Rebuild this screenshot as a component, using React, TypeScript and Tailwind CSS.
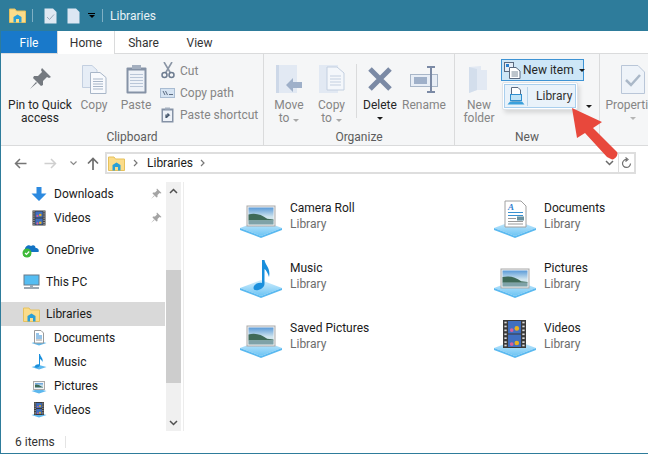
const font = "font-['Roboto',sans-serif]";

function Platform({ id }: { id: string }) {
  return (
    <g>
      <defs>
        <linearGradient id={id} x1="0" y1="0" x2="0" y2="1">
          <stop offset="0" stopColor="#d4effd" />
          <stop offset="1" stopColor="#6cc4f4" />
        </linearGradient>
      </defs>
      <path d="M0 28 L21 20 L42 28 L21 36 Z" fill={`url(#${id})`} />
      <path d="M0 28 L21 36 L42 28 L42 30 L21 38 L0 30 Z" fill="#5ab9f0" />
    </g>
  );
}

function Landscape({ x, y, w, h, id }: { x: number; y: number; w: number; h: number; id: string }) {
  return (
    <g>
      <defs>
        <linearGradient id={id} x1="0" y1="0" x2="0" y2="1">
          <stop offset="0" stopColor="#5b9bd8" />
          <stop offset="0.55" stopColor="#cfe4ee" />
        </linearGradient>
      </defs>
      <rect x={x} y={y} width={w} height={h} fill="#f4f4f4" stroke="#a9a9a9" />
      <rect x={x + 1.5} y={y + 1.5} width={w - 3} height={h - 3} fill={`url(#${id})`} />
      <path d={`M${x + 1.5} ${y + h * 0.42} Q${x + w * 0.4} ${y + h * 0.3} ${x + w * 0.72} ${y + h * 0.64} L${x + w - 1.5} ${y + h * 0.68} L${x + w - 1.5} ${y + h * 0.72} L${x + 1.5} ${y + h * 0.72} Z`} fill="#3f6a58" />
      <rect x={x + 1.5} y={y + h * 0.72} width={w - 3} height={h * 0.28 - 1.5} fill="#7fa2a8" />
    </g>
  );
}

function Film({ x, y, w, h }: { x: number; y: number; w: number; h: number }) {
  return (
    <g>
      <rect x={x} y={y} width={w} height={h} fill="#3a3a3a" />
      <rect x={x + w * 0.22} y={y + 1} width={w * 0.56} height={h / 2 - 1.5} fill="#3f6fc0" />
      <rect x={x + w * 0.22} y={y + h / 2 + 0.5} width={w * 0.56} height={h / 2 - 1.5} fill="#3f6fc0" />
      <circle cx={x + w * 0.6} cy={y + h * 0.3} r={w * 0.1} fill="#e8b020" />
      <circle cx={x + w * 0.38} cy={y + h * 0.36} r={w * 0.08} fill="#d8609a" />
      <circle cx={x + w * 0.6} cy={y + h * 0.82} r={w * 0.1} fill="#e8b020" />
      <circle cx={x + w * 0.38} cy={y + h * 0.86} r={w * 0.08} fill="#d8609a" />
      {[0.06, 0.2, 0.34, 0.48, 0.62, 0.76, 0.88].map((p) => (
        <g key={p}>
          <rect x={x + w * 0.06} y={y + h * p} width={w * 0.1} height={h * 0.06} fill="#ddd" />
          <rect x={x + w * 0.84} y={y + h * p} width={w * 0.1} height={h * 0.06} fill="#ddd" />
        </g>
      ))}
    </g>
  );
}

function LibIcon({ kind, name }: { kind: string; name: string }) {
  const id = name.replace(" ", "");
  return (
    <svg width="42" height="38" viewBox="0 0 42 38" className="shrink-0">
      <Platform id={`${id}-base`} />
      {kind === "pic" && <Landscape x={7} y={6} w={28} h={20} id={`${id}-sky`} />}
      {kind === "pic2" && <Landscape x={7} y={9} w={28} h={19} id={`${id}-sky`} />}
      {kind === "music" && (
        <path d="M22 0 L24.500 0 C25 5 31 8 29 17 C28 13 26 10 24.500 9 L24.500 24 C24.500 29 14 33 13.500 28 C13.500 24 19 22 22 23 Z" fill="#1a8fdc" />
      )}
      {kind === "doc" && (
        <g>
          <path d="M11 1 H27 L32 6 V27 H11 Z" fill="#fff" stroke="#a0a0a0" />
          <text x="14" y="10" fontSize="9" fontStyle="italic" fontWeight="700" fill="#2f80d0" fontFamily="Liberation Serif, serif">A</text>
          <path d="M14 12.500 H29 M14 15.500 H29" stroke="#3a90d0" />
          <path d="M14 18.500 H22 M14 21.500 H29 M14 24 H29" stroke="#999" />
          <rect x="23" y="16.500" width="7" height="4" fill="#6a92a0" />
        </g>
      )}
      {kind === "film" && <Film x={9} y={0} w={23} h={28} />}
    </svg>
  );
}

function SmallIcon({ kind }: { kind: string }) {
  if (kind === "down")
    return (
      <svg width="16" height="16" viewBox="0 0 16 16"><path d="M5.500 1 H10.500 V7.500 H15.500 L8 15 L0.500 7.500 H5.500 Z" fill="#2c8ae0" /></svg>
    );
  if (kind === "film")
    return <svg width="16" height="16" viewBox="0 0 16 16"><Film x={1.500} y={0.500} w={13} h={15} /></svg>;
  if (kind === "cloud")
    return (
      <svg width="18" height="16" viewBox="0 0 18 16">
        <path d="M3 9 C2 5 6 2 9 4 C12 2 14 5 13.500 6 C16 6 17.500 8 16.500 10 H6 Z" fill="#1273c4" />
        <circle cx="5" cy="11" r="4.500" fill="#3fba3a" />
        <path d="M3 11 L4.500 12.500 L7.200 9.500" stroke="#fff" strokeWidth="1.200" fill="none" />
      </svg>
    );
  if (kind === "pc")
    return (
      <svg width="17" height="16" viewBox="0 0 17 16">
        <rect x="1" y="1" width="15" height="10" fill="#55bdf2" stroke="#6a7a88" />
        <path d="M7 11 H10 V13 H7 Z" fill="#9aa8b4" />
        <path d="M1 14 H16" stroke="#7a8a98" strokeWidth="1.500" />
      </svg>
    );
  if (kind === "lib") return <LibFolder />;
  return (
    <svg width="16" height="16" viewBox="0 0 16 16">
      <path d="M0.500 13 L8 11 L15.500 13 L8 15.500 Z" fill="#5db8ee" />
      {kind === "doc" && (
        <g>
          <path d="M3.500 0.500 H10 L12.500 3 V13 H3.500 Z" fill="#fff" stroke="#9a9a9a" />
          <path d="M5 4 H8 M5 6 H11 M5 8 H11" stroke="#2f88d0" />
          <path d="M5 10 H11" stroke="#999" />
        </g>
      )}
      {kind === "note" && (
        <path d="M8 0 H9 C9.500 3 12.500 4 11.500 8 C11 6.500 10 5.500 9 5 V11 C9 13.500 4 15 4 12.500 C4 11 6.500 10 8 10.500 Z" fill="#1a8fdc" />
      )}
      {kind === "pic" && <Landscape x={2.500} y={3.500} w={11} h={8} id="nav-sky" />}
      {kind === "filmlib" && <Film x={3} y={0} w={10} h={13} />}
    </svg>
  );
}

function LibFolder() {
  return (
    <svg width="17" height="15" viewBox="0 0 17 15">
      <path d="M0.500 1 H6 L7.500 3 H16.500 V14.500 H0.500 Z" fill="#fbdc8a" stroke="#e6c15c" />
      <path d="M4.500 9 L8.500 6.500 L12.500 9 V14.500 H10 V11 H7 V14.500 H4.500 Z" fill="#2a9fd6" />
    </svg>
  );
}

function Pin({ color = "#a4a4a4", size = 12 }: { color?: string; size?: number }) {
  return (
    <svg width={size} height={size} viewBox="0 0 12 12">
      <path d="M7 0.500 L11.500 5 L10.500 5.500 L9.500 5 L7.500 7 L7.500 9 L6.500 9.500 L2.500 5.500 L3 4.500 L5 4.500 L7 2.500 L6.500 1.500 Z M4 7.500 L1 11 L4.500 8 Z" fill={color} />
    </svg>
  );
}

function Caret({ color = "#1a1a1a" }: { color?: string }) {
  return <span className="inline-block h-0 w-0 border-x-[3px] border-t-[3px] border-x-transparent" style={{ borderTopColor: color }} />;
}

function LargeBtn({ w, lines, icon, dim = true, caret, ml = 0 }: { w: number; lines: string[]; icon: React.ReactNode; dim?: boolean; caret?: string; ml?: number }) {
  return (
    <div className={`flex shrink-0 flex-col items-center ${dim ? "text-[#858585]" : "text-[#262626]"}`} style={{ width: w, marginLeft: ml }}>
      <div className="flex h-[38px] items-center justify-center">{icon}</div>
      <div className="mt-[1px] text-center text-[12px] leading-[13px] whitespace-nowrap">
        {lines.map((l, i) => (
          <div key={i} className="h-[13px]">
            {l}
            {i === lines.length - 1 && caret === "inline" && (
              <span className="ml-[4px] inline-block align-middle"><Caret color="#a8a8a8" /></span>
            )}
          </div>
        ))}
        {caret === "below" && <div className="flex h-[13px] items-center justify-center"><Caret /></div>}
        {caret === "belowdim" && <div className="flex h-[13px] items-center justify-center"><Caret color="#b5b5b5" /></div>}
      </div>
    </div>
  );
}

function Group({ w, label, children }: { w: number; label: string; children: React.ReactNode }) {
  return (
    <div className="flex h-full shrink-0 flex-col border-r border-[#dadbdc]" style={{ width: w }}>
      <div className="flex flex-1 pt-[6px]">{children}</div>
      <div className="h-[20px] pt-[2px] text-center text-[12px] leading-[20px] text-[#5c5c5c]">{label}</div>
    </div>
  );
}

function NavRow({ indent, icon, text, pin, sel }: { indent: number; icon: string; text: string; pin?: boolean; sel?: boolean }) {
  return (
    <div className={`flex h-[24px] items-center ${sel ? "bg-[#d9d9d9]" : ""}`}>
      <div className="flex w-[20px] justify-center" style={{ marginLeft: indent }}><SmallIcon kind={icon} /></div>
      <span className="ml-[5px] flex-1 text-[12px] text-[#1a1a1a]">{text}</span>
      {pin && <span className="mr-[3px]"><Pin /></span>}
    </div>
  );
}

function Item({ kind, name }: { kind: string; name: string }) {
  return (
    <div className="flex h-[60px] items-start">
      <LibIcon kind={kind} name={name} />
      <div className="ml-[8px] leading-[16px]">
        <div className="text-[12px] text-[#1a1a1a]">{name}</div>
        <div className="text-[12px] text-[#6d6d6d]">Library</div>
      </div>
    </div>
  );
}

export default function App() {
  return (
    <div className={`relative flex h-[454px] w-[648px] flex-col overflow-hidden border-b border-l border-[#2e7c9b] bg-white ${font}`}>
      {/* title bar */}
      <div className="-ml-px flex h-[31px] shrink-0 items-center bg-[#2e7c9b] pl-[9px] text-[12px] text-white">
        <LibFolder />
        <div className="ml-[6px] h-[13px] w-px bg-[#7fb0c4]" />
        <svg className="ml-[11px]" width="13" height="16" viewBox="0 0 13 16"><path d="M0.500 0.500 H9 L12.500 4 V15.500 H0.500 Z" fill="#dfe8f2" /><path d="M3 9 L5.500 11.500 L10 6.500" stroke="#9aa9b8" fill="none" /></svg>
        <svg className="ml-[10px]" width="13" height="16" viewBox="0 0 13 16"><path d="M0.500 0.500 H9 L12.500 4 V15.500 H0.500 Z" fill="#dce6f3" /></svg>
        <div className="ml-[8px] flex w-[7px] flex-col items-center"><div className="mb-[1px] h-px w-[7px] bg-black" /><Caret color="#000" /></div>
        <div className="ml-[7px] h-[13px] w-px bg-[#7fb0c4]" />
        <span className="ml-[7px] text-[#e8f2f6]">Libraries</span>
      </div>

      {/* tabs */}
      <div className="relative flex h-[23px] shrink-0 items-stretch border-b border-[#dadbdc] text-[12px] text-[#333]">
        <div className="flex w-[56px] items-center justify-center bg-[#1979ca] pt-[1px] text-white">File</div>
        <div className="-mb-px flex w-[58px] items-center justify-center border-x border-[#dadbdc] bg-white pt-[1px]">Home</div>
        <div className="flex w-[57px] items-center justify-center pt-[1px]">Share</div>
        <div className="flex w-[55px] items-center justify-center pt-[1px]">View</div>
      </div>

      {/* ribbon */}
      <div className="flex h-[92px] shrink-0 border-b border-[#dadbdc] bg-[#f5f6f7] text-[12px]">
        <Group w={263} label="Clipboard">
          <LargeBtn w={72} ml={3} dim={false} lines={["Pin to Quick", "access"]} icon={
            <svg width="24" height="24" viewBox="0 0 12 12"><path d="M7 0.500 L11.500 5 L10.500 5.500 L9.500 5 L7.500 7 L7.500 9 L6.500 9.500 L2.500 5.500 L3 4.500 L5 4.500 L7 2.500 L6.500 1.500 Z M4 7.500 L1 11 L4.500 8 Z" fill="#757a80" /></svg>
          } />
          <LargeBtn w={36} lines={["Copy"]} icon={
            <svg width="25" height="29" viewBox="0 0 25 29">
              <path d="M0.500 0.500 H10 L15 5 V22.500 H0.500 Z" fill="#e6edf6" stroke="#c3cfe0" />
              <path d="M8.500 7.500 H18 L24 12.500 V28.500 H8.500 Z" fill="#f8fafd" stroke="#a8b6c8" />
              <path d="M11 14 H21 M11 16.500 H21 M11 19 H21 M11 21.500 H21 M11 24 H21" stroke="#a8b6c8" />
            </svg>
          } />
          <LargeBtn w={40} ml={4} lines={["Paste"]} icon={
            <svg width="21" height="30" viewBox="0 0 21 30">
              <rect x="0.500" y="3.500" width="20" height="26" rx="1" fill="#8592a6" />
              <rect x="2.500" y="6.500" width="16" height="21" fill="#eef2f8" />
              <path d="M4 10.500 H17 M4 13.500 H17 M4 16.500 H17 M4 19.500 H17 M4 22.500 H17" stroke="#b9c6d8" />
              <rect x="6" y="1" width="9" height="4" fill="#a4afbf" />
            </svg>
          } />
          <div className="ml-[3px] flex shrink-0 flex-col gap-[3px] pt-[1px] text-[#858585]">
            {[
              ["Cut", <svg key="c" width="14" height="17" viewBox="0 0 14 17"><path d="M3 0 L9.500 11 M11 0 L4.500 11" stroke="#8a95a5" strokeWidth="1.600" /><circle cx="3.500" cy="13" r="2.500" fill="none" stroke="#6d7c90" strokeWidth="1.500" /><circle cx="10.500" cy="13" r="2.500" fill="none" stroke="#6d7c90" strokeWidth="1.500" /></svg>],
              ["Copy path", <svg key="p" width="15" height="10" viewBox="0 0 15 10"><rect x="0.500" y="0.500" width="14" height="9" fill="#d5e3f2" stroke="#a9bcd2" /><path d="M3 3 L5 7 M5.500 3 L7.500 7 M9 6.500 H13" stroke="#5a6a80" /></svg>],
              ["Paste shortcut", <svg key="s" width="13" height="16" viewBox="0 0 13 16"><rect x="0.500" y="1.500" width="12" height="14" fill="#8592a6" /><rect x="2" y="3.500" width="9" height="10.500" fill="#eef2f8" /><rect x="4" y="0.500" width="5" height="2" fill="#a4afbf" /><path d="M5 11 V8 H8 L6.500 6.500 M8 8 L5.500 10.500" stroke="#44566c" strokeWidth="1.200" fill="none" /></svg>],
            ].map(([t, ic]) => (
              <div key={t as string} className="flex h-[19px] items-center">
                <span className="flex w-[17px] justify-center">{ic}</span>
                <span className="ml-[4px] whitespace-nowrap">{t}</span>
              </div>
            ))}
          </div>
        </Group>
        <Group w={191} label="Organize">
          <LargeBtn w={42} ml={4} lines={["Move", "to"]} caret="inline" icon={
            <svg width="27" height="29" viewBox="0 0 27 29"><path d="M0 0 H21 V28 H0 Z" fill="#e2e9f3" /><path d="M0 0 H3 V28 H0 Z" fill="#cdd8e8" /><path d="M10 20 L17 13 V17 H26 V23 H17 V27 Z" fill="#9fb0c9" /></svg>
          } />
          <LargeBtn w={43} lines={["Copy", "to"]} caret="inline" icon={
            <svg width="26" height="29" viewBox="0 0 26 29"><path d="M0 0 H19 V28 H0 Z" fill="#e2e9f3" /><path d="M8 2 H18 L25 8 V25 H8 Z" fill="#f4f7fb" stroke="#c3cfe0" /><path d="M11 11 H22 M11 14 H22 M11 17 H22 M11 20 H22" stroke="#c3cfe0" /></svg>
          } />
          <div className="mb-[7px] ml-[3px] mt-[4px] w-px bg-[#dadbdc]" />
          <LargeBtn w={46} dim={false} lines={["Delete"]} caret="below" icon={
            <svg width="26" height="26" viewBox="0 0 26 26"><path d="M3 3 L23 23 M23 3 L3 23" stroke="#7b8aa5" strokeWidth="5" /></svg>
          } />
          <LargeBtn w={42} lines={["Rename"]} icon={
            <svg width="29" height="27" viewBox="0 0 29 27"><rect x="0.500" y="8.500" width="27" height="12" fill="#e8eef6" stroke="#a8b6c8" /><rect x="4" y="11" width="13" height="7" fill="#9fb0c9" /><path d="M17 1 H25 M17 26 H25 M21 1 V26" stroke="#7b8aa5" strokeWidth="2" /></svg>
          } />
        </Group>
        <Group w={145} label="New">
          <LargeBtn w={48} lines={["New", "folder"]} icon={
            <svg width="20" height="27" viewBox="0 0 20 27"><path d="M0 1 L12 0 V4 H18 V24 H8 L0 27 Z" fill="#e2e9f3" /><path d="M0 1 L8 3 V24 L0 27 Z" fill="#d3deec" /></svg>
          } />
          <div className="ml-[-2px] mt-[-1px] shrink-0">
            <div className="flex h-[22px] w-[83px] items-center border border-[#3d93d4] bg-[#cde6f7] pl-[2px] whitespace-nowrap text-[#262626]">
              <svg className="shrink-0" width="17" height="17" viewBox="0 0 17 17"><rect x="0.500" y="0.500" width="9" height="9" fill="#e6eef8" stroke="#5a6a80" /><rect x="2" y="2" width="3" height="3" fill="#2a80d0" /><path d="M5.500 5.500 H12 L16 9 V16.500 H5.500 Z" fill="#fff" stroke="#5a6a80" /><path d="M7.500 10 H14 M7.500 12 H14 M7.500 14 H14" stroke="#7a8a98" /></svg>
              <span className="ml-[2px]">New item</span>
              <span className="ml-[5px] flex"><Caret /></span>
            </div>
          </div>
        </Group>
        <div className="min-w-0 flex-1 overflow-hidden pt-[6px] text-[#858585]">
          <LargeBtn w={64} ml={1} lines={["Properties"]} caret="belowdim" icon={
            <svg width="24" height="29" viewBox="0 0 24 29"><path d="M0.500 0.500 H17 L23.500 7 V28.500 H0.500 Z" fill="#eef3f9" stroke="#b9c6d8" /><path d="M5 15 L10 20 L19 10" stroke="#aab8c8" strokeWidth="2.500" fill="none" /></svg>
          } />
        </div>
      </div>

      {/* address row */}
      <div className="flex h-[36px] shrink-0 items-center pb-[2px] text-[12px]">
        <svg className="ml-[13px]" width="13" height="11" viewBox="0 0 13 11"><path d="M12.500 5.500 H1.500 M6 1 L1.500 5.500 L6 10" stroke="#757575" strokeWidth="1.500" fill="none" /></svg>
        <svg className="ml-[17px]" width="13" height="11" viewBox="0 0 13 11"><path d="M0.500 5.500 H11.500 M7 1 L11.500 5.500 L7 10" stroke="#cfcfcf" strokeWidth="1.500" fill="none" /></svg>
        <svg className="ml-[13px]" width="7" height="5" viewBox="0 0 7 5"><path d="M0.500 0.500 L3.500 3.500 L6.500 0.500" stroke="#8a8a8a" strokeWidth="1.200" fill="none" /></svg>
        <svg className="ml-[10px]" width="12" height="13" viewBox="0 0 12 13"><path d="M6 13 V2 M1 6.500 L6 1.500 L11 6.500" stroke="#6e6e6e" strokeWidth="1.700" fill="none" /></svg>
        <div className="ml-[6px] flex h-[22px] w-[531px] items-center border-2 border-[#dedede]">
          <div className="ml-[1px] flex"><LibFolder /></div>
          <svg className="ml-[8px]" width="5" height="8" viewBox="0 0 5 8"><path d="M1 1 L4 4 L1 7" stroke="#777" strokeWidth="1.200" fill="none" /></svg>
          <span className="ml-[9px] text-[#1a1a1a]">Libraries</span>
          <svg className="ml-[7px]" width="5" height="8" viewBox="0 0 5 8"><path d="M1 1 L4 4 L1 7" stroke="#777" strokeWidth="1.200" fill="none" /></svg>
          <div className="flex-1" />
          <svg className="mr-[4px]" width="9" height="6" viewBox="0 0 9 6"><path d="M1 1 L4.500 4.500 L8 1" stroke="#6a6a6a" strokeWidth="1.500" fill="none" /></svg>
          <div className="flex h-full w-[16px] items-center justify-center border-l border-[#dedede]">
            <svg width="11" height="12" viewBox="0 0 11 12"><path d="M9.500 6.500 A4 4 0 1 1 6 2.500 M4.500 0.500 L7 2.500 L4.500 4.500" stroke="#707070" strokeWidth="1.200" fill="none" /></svg>
          </div>
        </div>
      </div>

      {/* main */}
      <div className="flex h-[249px] shrink-0">
        <div className="w-[164px] border-b-0">
          <NavRow indent={28} icon="down" text="Downloads" pin />
          <NavRow indent={28} icon="film" text="Videos" pin />
          <div className="h-[8px]" />
          <NavRow indent={20} icon="cloud" text="OneDrive" />
          <div className="h-[8px]" />
          <NavRow indent={20} icon="pc" text="This PC" />
          <div className="h-[8px]" />
          <NavRow indent={20} icon="lib" text="Libraries" sel />
          <NavRow indent={28} icon="doc" text="Documents" />
          <NavRow indent={28} icon="note" text="Music" />
          <NavRow indent={28} icon="pic" text="Pictures" />
          <NavRow indent={28} icon="filmlib" text="Videos" />
        </div>
        <div className="ml-[1px] flex w-[15px] flex-col bg-[#f0f0f0]">
          <div className="flex h-[18px] items-center justify-center">
            <svg width="9" height="6" viewBox="0 0 9 6"><path d="M1 5 L4.500 1.500 L8 5" stroke="#505050" strokeWidth="1.500" fill="none" /></svg>
          </div>
          <div className="mt-[70px] h-[113px] bg-[#cdcdcd]" />
          <div className="flex-1" />
          <div className="flex h-[17px] items-center justify-center">
            <svg width="9" height="6" viewBox="0 0 9 6"><path d="M1 1 L4.500 4.500 L8 1" stroke="#505050" strokeWidth="1.500" fill="none" /></svg>
          </div>
        </div>
        <div className="ml-[2px] w-px bg-[#ececec]" />
        <div className="grid flex-1 grid-cols-[254px_1fr] content-start pl-[56px] pt-[18px]">
          <Item kind="pic" name="Camera Roll" />
          <Item kind="doc" name="Documents" />
          <Item kind="music" name="Music" />
          <Item kind="pic2" name="Pictures" />
          <Item kind="pic" name="Saved Pictures" />
          <Item kind="film" name="Videos" />
        </div>
      </div>

      {/* status */}
      <div className="flex flex-1 items-center text-[12px] text-[#333]">
        <span className="ml-[14px]">6 items</span>
        <div className="ml-[10px] h-[12px] w-px bg-[#e4e4e4]" />
      </div>

      {/* popup over the ribbon */}
      <div className="absolute left-[501px] top-[82px] h-[28px] w-[76px] rounded-[2px] border border-[#dfe3e8] bg-white p-[1px] shadow-[2px_3px_4px_rgba(0,0,0,0.12)]">
        <div className="flex h-full items-center border border-[#a9cfee] bg-[#e9f2fa] text-[12px] text-[#333]">
          <div className="flex w-[23px] justify-center border-r border-[#b8d3ea]">
            <svg width="18" height="19" viewBox="0 0 18 19"><path d="M4.500 0.500 H11 L13.500 3 V14 H4.500 Z" fill="#fff" stroke="#5a6a80" /><rect x="3.500" y="7.500" width="11" height="6" fill="#bfe3f7" stroke="#2f8fd0" /><path d="M0.500 17.500 L3 14.500 H15 L17.500 17.500 Z" fill="#3aa0dc" /></svg>
          </div>
          <span className="ml-[8px]">Library</span>
        </div>
      </div>
      <div className="absolute left-[585px] top-[91px]"><Caret /></div>

      {/* red arrow */}
      <svg className="absolute left-[569px] top-[106px]" width="50" height="60" viewBox="0 0 50 60">
        <path d="M2 2 L32 16 L23 22 L47 46 C49 49 44 55 41 53 L37 51 L15 27 L7 32 Z" fill="#e8483c" />
      </svg>
    </div>
  );
}
